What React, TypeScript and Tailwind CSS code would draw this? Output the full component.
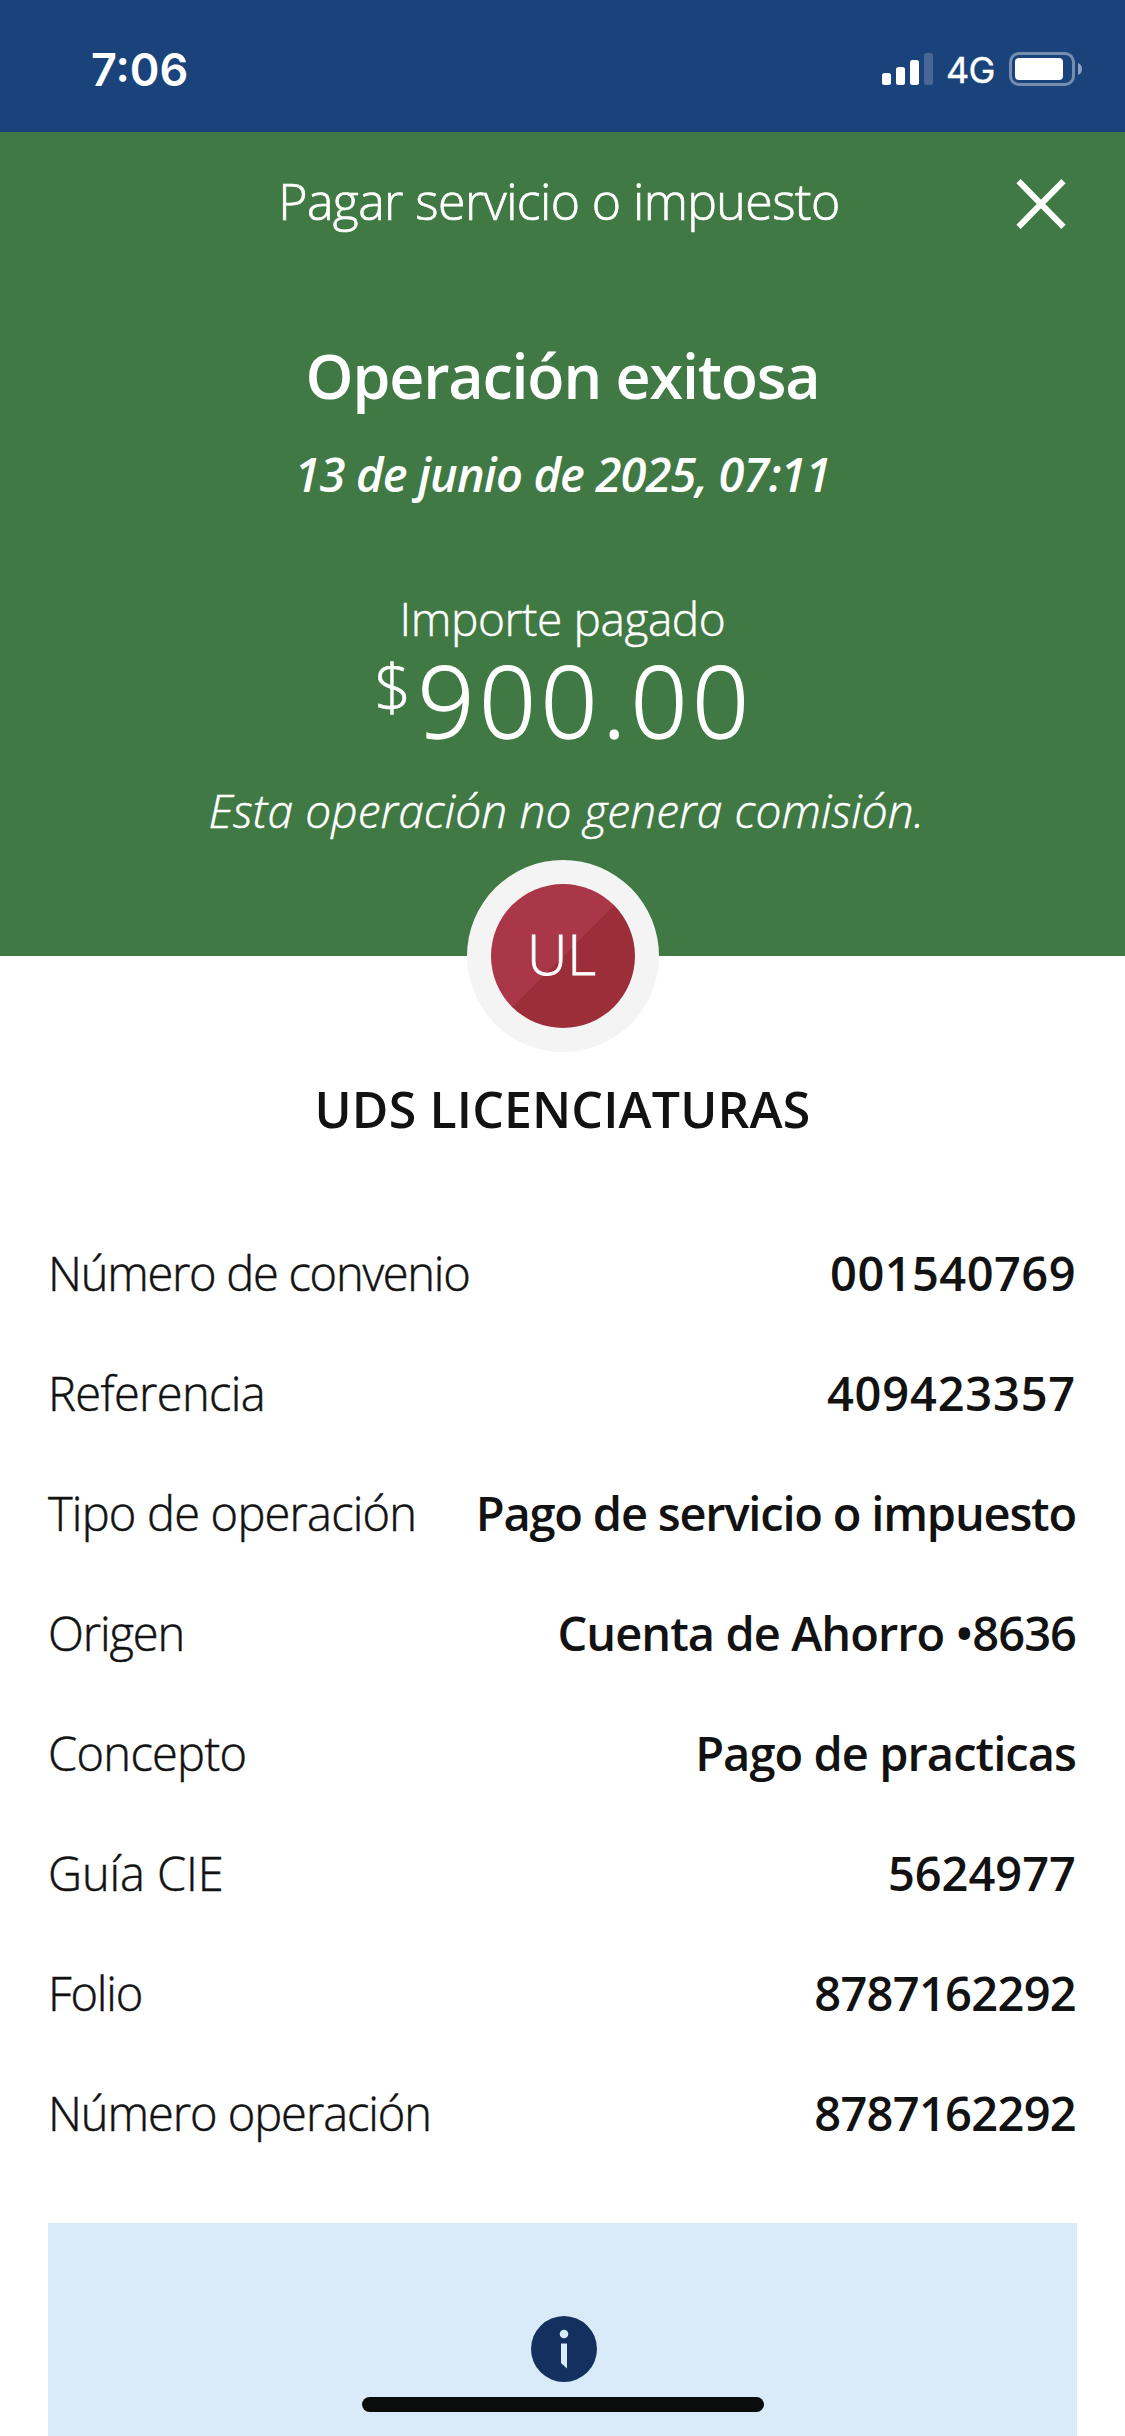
type Detail = {
  label: string
  value: string
  labelClass: string
  valueClass: string
}

const details: Detail[] = [
  { label: 'Número de convenio', value: '001540769', labelClass: 'tracking-[-1.25px]', valueClass: 'tracking-[0.45px]' },
  { label: 'Referencia', value: '409423357', labelClass: 'tracking-[-0.65px]', valueClass: 'tracking-[0.8px]' },
  { label: 'Tipo de operación', value: 'Pago de servicio o impuesto', labelClass: 'tracking-[-0.8px]', valueClass: 'tracking-[-1.2px]' },
  { label: 'Origen', value: 'Cuenta de Ahorro •8636', labelClass: 'tracking-[-1.1px]', valueClass: 'tracking-[-0.95px]' },
  { label: 'Concepto', value: 'Pago de practicas', labelClass: 'tracking-[-0.7px]', valueClass: 'tracking-[-0.95px]' },
  { label: 'Guía CIE', value: '5624977', labelClass: 'tracking-[-0.1px]', valueClass: 'tracking-[0px]' },
  { label: 'Folio', value: '8787162292', labelClass: 'tracking-[-1.2px]', valueClass: 'tracking-[-0.7px]' },
  { label: 'Número operación', value: '8787162292', labelClass: 'tracking-[-1.05px]', valueClass: 'tracking-[-0.7px]' },
]

function StatusBar() {
  return (
    <div className="flex h-[132px] items-start justify-between bg-[#1a437b] pt-[39px] pr-[43px] pl-[91px] font-['Inter',sans-serif] text-white">
      <span className="h-[60px] text-[45px] leading-[61px] font-semibold">7:06</span>
      <div className="flex h-[60px] items-center">
        <svg width="51" height="34" viewBox="0 0 51 34" fill="white">
          <rect x="0" y="21" width="9" height="12" rx="2.5" />
          <rect x="14" y="15" width="9" height="18" rx="2.5" />
          <rect x="28" y="8" width="9" height="25" rx="2.5" />
          <rect x="42" y="1" width="9" height="32" rx="2.5" opacity="0.2" />
        </svg>
        <span className="mt-[2px] ml-[13px] w-[49px] text-[36px] leading-[60px] tracking-[-0.02em] [-webkit-text-stroke:0.4px_white]">4G</span>
        <svg className="ml-[14px]" width="73" height="34" viewBox="0 0 73 34" fill="white">
          <rect x="1.5" y="1.5" width="63" height="31" rx="8.5" fill="none" stroke="white" strokeWidth="3" opacity="0.4" />
          <rect x="6" y="6" width="48" height="22" rx="4" />
          <path d="M69 11c2.600 1 4 3.300 4 6s-1.400 5-4 6z" opacity="0.5" />
        </svg>
      </div>
    </div>
  )
}

function Hero() {
  return (
    <section className="flex h-[824px] flex-col items-center bg-[#417944] text-center whitespace-nowrap text-white">
      <header className="grid h-[138px] w-full grid-cols-[1fr_auto_1fr] items-center pr-[56px] pl-[49px]">
        <span />
        <h1 className="text-[50px] leading-[60px] font-light tracking-[-0.6px] [-webkit-text-stroke:0.7px_white]">Pagar servicio o impuesto</h1>
        <button className="mt-[6px] justify-self-end" aria-label="Cerrar">
          <svg width="56" height="56" viewBox="0 0 56 56" fill="none" stroke="white" strokeWidth="6">
            <path d="M5.500 5.200L50.500 50.800M50.500 5.200L5.500 50.800" />
          </svg>
        </button>
      </header>

      <h2 className="mt-[58px] h-[96px] text-[61px] leading-[96px] font-semibold tracking-[-1.2px]">Operación exitosa</h2>
      <p className="mt-[20px] text-[47px] leading-[60px] font-semibold tracking-[-0.85px] italic">13 de junio de 2025, 07:11</p>

      <p className="mt-[84px] text-[46px] leading-[60px] font-light tracking-[-0.4px] [-webkit-text-stroke:0.5px_white]">Importe pagado</p>
      <div className="mt-px flex h-[100px] items-start pl-[3px] font-light">
        <span className="mt-[-3px] text-[65px] leading-[80px] [-webkit-text-stroke:0.6px_white]">$</span>
        <span className="ml-[6px] text-[100px] leading-[100px] tracking-[4.5px] [-webkit-text-stroke:1.4px_white]">900.00</span>
      </div>
      <p className="mt-[31px] pl-[8px] text-[46px] leading-[60px] font-light tracking-[0.13px] italic [-webkit-text-stroke:0.5px_white]">
        Esta operación no genera comisión.
      </p>
    </section>
  )
}

function Avatar() {
  return (
    <div className="mx-auto -mt-24 flex size-48 items-center justify-center rounded-full bg-[#f4f4f4]">
      <div className="flex size-36 items-center justify-center rounded-full bg-[linear-gradient(135deg,#a93747_50%,#9b2e39_50%)]">
        <span className="mr-[2px] mb-[7px] text-[56px] leading-none font-light text-white [-webkit-text-stroke:0.8px_white]">UL</span>
      </div>
    </div>
  )
}

function InfoBox() {
  return (
    <div className="mx-[48px] mt-[50px] flex h-[213px] justify-center bg-[#d9ebf9] pt-[93px] pl-[2px]">
      <svg width="66" height="66" viewBox="0 0 66 66">
        <circle cx="33" cy="33" r="33" fill="#14305f" />
        <circle cx="33" cy="18" r="4.300" fill="#d9ebf9" />
        <path d="M30 27.500h6v25l-6-5.500z" fill="#d9ebf9" />
      </svg>
    </div>
  )
}

export default function App() {
  return (
    <main className="relative h-[2436px] w-[1125px] overflow-hidden bg-white font-['Open_Sans',sans-serif] text-[#121212]">
      <StatusBar />
      <Hero />
      <Avatar />

      <h3 className="mt-[27px] text-center text-[50px] leading-[60px] font-semibold tracking-[0.15px]">UDS LICENCIATURAS</h3>

      <dl className="mt-[74px] pr-[49px] pl-[48px]">
        {details.map((d) => (
          <div key={d.label} className="flex h-[120px] items-center justify-between text-[47px] leading-[60px] whitespace-nowrap">
            <dt className={`font-light [-webkit-text-stroke:0.5px_#121212] ${d.labelClass}`}>{d.label}</dt>
            <dd className={`font-semibold ${d.valueClass}`}>{d.value}</dd>
          </div>
        ))}
      </dl>

      <InfoBox />

      {/* home indicator */}
      <div className="absolute top-[2397px] left-[362px] h-[15px] w-[402px] rounded-full bg-[#0b0d0c]" />
    </main>
  )
}
